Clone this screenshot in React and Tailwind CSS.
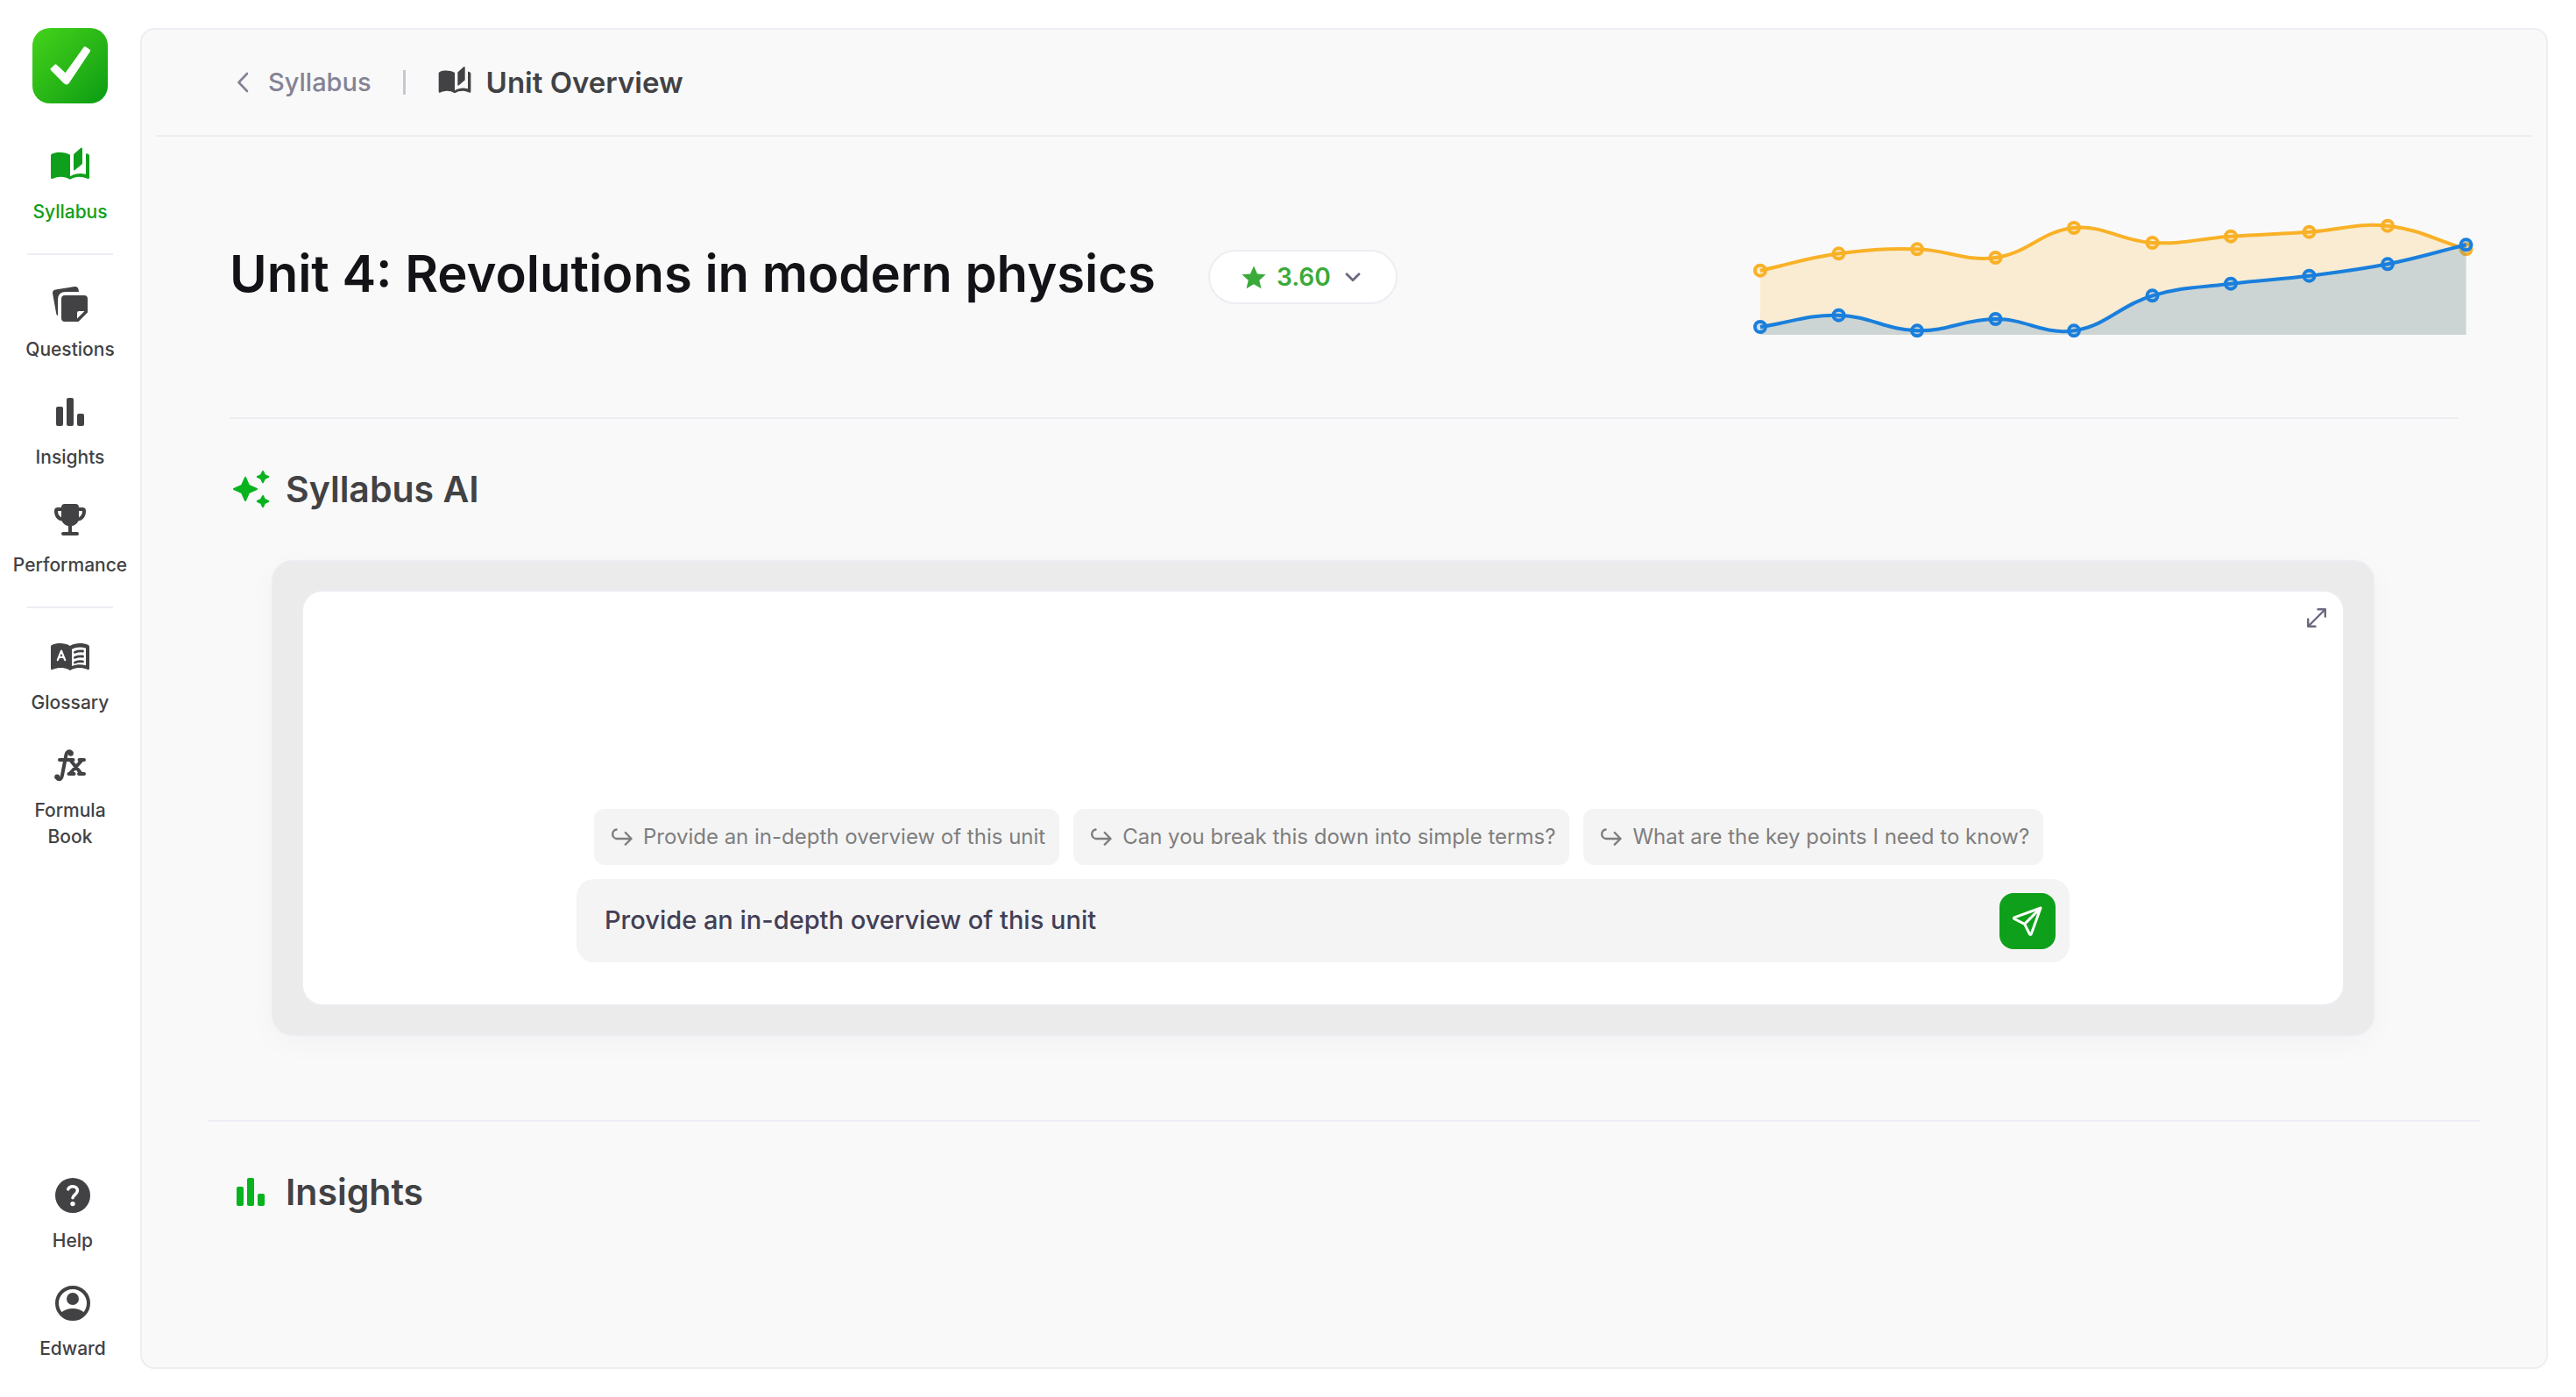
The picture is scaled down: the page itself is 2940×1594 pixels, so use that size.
const ORANGE = [308.7, 289.3, 284.3, 294, 260, 277, 269.7, 264.7, 257.7, 284.3];
const BLUE = [373, 359.7, 377.3, 364, 377.3, 337.3, 323.7, 314.7, 301.3, 279.3];
const CHART_TOP = 244;
const BASELINE = 138;
const STEP = 89.5;

function toPoints(values) {
  return values.map((v, i) => ({ x: 9 + i * STEP, y: v - CHART_TOP }));
}

// Smooth line through the points, using a cardinal spline of tension 0.4.
function splinePath(points) {
  const tension = 0.4;
  const controls = points.map((p, i) => {
    const prev = points[i - 1] || p;
    const next = points[i + 1] || p;
    const d01 = Math.hypot(p.x - prev.x, p.y - prev.y);
    const d12 = Math.hypot(next.x - p.x, next.y - p.y);
    const a = (tension * d01) / (d01 + d12);
    const b = (tension * d12) / (d01 + d12);
    return {
      before: { x: p.x - a * (next.x - prev.x), y: p.y - a * (next.y - prev.y) },
      after: { x: p.x + b * (next.x - prev.x), y: p.y + b * (next.y - prev.y) },
    };
  });
  let d = `M${points[0].x} ${points[0].y}`;
  for (let i = 1; i < points.length; i++) {
    const c1 = controls[i - 1].after;
    const c2 = controls[i].before;
    d += ` C${c1.x} ${c1.y} ${c2.x} ${c2.y} ${points[i].x} ${points[i].y}`;
  }
  return d;
}

function Series({ values, color, fillOpacity }) {
  const points = toPoints(values);
  const line = splinePath(points);
  const last = points[points.length - 1];
  return (
    <g>
      <path d={`${line} L${last.x} ${BASELINE} L${points[0].x} ${BASELINE} Z`} fill={color} fillOpacity={fillOpacity} />
      <path d={line} fill="none" stroke={color} strokeWidth="4" />
      {points.map((p) => (
        <circle key={p.x} cx={p.x} cy={p.y} r="6" fill={color} fillOpacity={fillOpacity} stroke={color} strokeWidth="4" />
      ))}
    </g>
  );
}

function TrendChart() {
  return (
    <svg viewBox="0 0 806 144" className="h-36 w-[806px] shrink-0 overflow-visible" role="img" aria-label="Unit rating trend">
      <Series values={ORANGE} color="#f9b127" fillOpacity="0.18" />
      <Series values={BLUE} color="#1a7fdc" fillOpacity="0.2" />
    </svg>
  );
}

function Icon({ className = "size-12", children }) {
  return (
    <svg viewBox="0 0 48 48" className={className} fill="currentColor" aria-hidden="true">
      {children}
    </svg>
  );
}

function BookIcon({ className }) {
  return (
    <Icon className={className}>
      <path d="M2 11.6Q2 10 3.400 9.500C9.500 7 17.500 7.300 24 10.700V38.800C17.500 34.800 10.500 35 4.400 37.800Q2 38.800 2 36.600Z" />
      <path d="M28 11Q28 10.200 28.600 9.600L36 3Q38 1.600 38 4V20Q38 20.800 37.400 21.400L29.800 27.800Q28 29.200 28 27.200Z" />
      <path d="M24 35.200C29.600 31.600 36 31.200 42 32.800V9Q43.600 9.400 45 10.100Q46 10.600 46 12V36.600Q46 38.800 43.600 37.800C37 35 30.500 34.800 24 38.800Z" />
    </Icon>
  );
}

function NotesIcon() {
  return (
    <Icon>
      <path d="M4.100 12Q3.600 8.200 7.400 7.600L29 4Q33 3.500 33.600 7.500L34 10H19Q10 10 10 19V37Q8.600 36.800 8.300 35.300Z" />
      <path fillRule="evenodd" d="M18 14H40Q44 14 44 18V33.500L33.500 44H18Q14 44 14 40V18Q14 14 18 14ZM32 40.500L40.500 32H34Q32 32 32 34Z" />
    </Icon>
  );
}

function BarsIcon() {
  return (
    <Icon>
      <rect x="8" y="18" width="8" height="22" rx="2" />
      <rect x="20" y="8" width="8" height="32" rx="2" />
      <rect x="32" y="26" width="8" height="14" rx="2" />
    </Icon>
  );
}

function TrophyIcon() {
  return (
    <Icon>
      <path d="M18 6H30Q34 6 34 10H38Q42 10 42 14C42 20 39 24.600 33.400 25.600C31.800 28.800 29.400 30.700 26 31.300V38H32A2 2 0 0 1 32 42H16A2 2 0 0 1 16 38H22V31.300C18.600 30.700 16.200 28.800 14.600 25.600C9 24.600 6 20 6 14Q6 10 10 10H14Q14 6 18 6Z" />
      <path fill="#fff" d="M10 14H14V21.200C11.400 20 10 17.400 10 14ZM38 14H34V21.200C36.600 20 38 17.400 38 14Z" />
    </Icon>
  );
}

function GlossaryIcon() {
  return (
    <Icon>
      <path d="M2 12Q2 10.500 3.200 10C9.500 7.300 17.500 7.300 24 11C30.500 7.300 38.500 7.300 44.800 10Q46 10.500 46 12V36.500Q46 38.600 44 38C37 35.300 30.500 35.300 24 39C17.500 35.300 11 35.300 4 38Q2 38.600 2 36.500Z" />
      <path fill="#fff" d="M26 14.800C31 12 36.500 11.800 42 13.600V33.300C36.500 31.600 31 31.800 26 34Z" />
      <path fill="none" stroke="currentColor" strokeWidth="2.800" strokeLinecap="round" d="M29.400 18.200Q33.500 16.400 38.500 17M29.400 24.200Q33.500 22.400 38.500 23M29.400 30Q33.500 28.200 38.500 28.800" />
      <path fill="none" stroke="#fff" strokeWidth="2.200" strokeLinecap="round" strokeLinejoin="round" d="M9.800 27.200L14 16.600L18.200 27.200M11.200 24H16.800" />
    </Icon>
  );
}

function FormulaIcon() {
  return (
    <Icon>
      <circle cx="24.800" cy="10.800" r="3" />
      <circle cx="9.200" cy="37.600" r="3" />
      <path
        fill="none"
        stroke="currentColor"
        strokeWidth="4"
        strokeLinecap="round"
        d="M25.500 9.400C24 7.400 20.500 7.600 19.500 12L15 35.500C14.200 39.800 12.500 40.600 10 39.800M12 18H27.500M24.500 18.500L36.500 33.500M37.500 18.500L23.800 33.500M34.500 18H40M22.500 34H28.500M34 34H40"
      />
    </Icon>
  );
}

function HelpIcon() {
  return (
    <Icon>
      <circle cx="24" cy="24" r="20" />
      <path
        fill="none"
        stroke="#fff"
        strokeWidth="3.600"
        strokeLinecap="round"
        d="M18.800 16.800C19.800 14.800 21.600 13.800 24 13.800C27.200 13.800 29.400 15.600 29.400 18.400C29.400 20.400 28.200 21.600 26.600 23.200C25 24.600 24 25.400 24 26.800"
      />
      <circle cx="24" cy="33.600" r="2.700" fill="#fff" />
    </Icon>
  );
}

function UserIcon() {
  return (
    <Icon>
      <circle cx="24" cy="24" r="18" fill="none" stroke="currentColor" strokeWidth="4" />
      <circle cx="24" cy="19" r="7" />
      <path d="M10.500 35C17.500 28.300 30.500 28.300 37.500 35A17.400 17.400 0 0 1 10.500 35Z" />
    </Icon>
  );
}

function SparklesIcon() {
  return (
    <Icon>
      <path
        stroke="currentColor"
        strokeWidth="2"
        strokeLinejoin="round"
        d="M18 11L22 20L31 24L22 28L18 37L14 28L5 24L14 20ZM38 4L40 8.200L44.200 10L40 12L38 16.200L36 12L31.800 10L36 8.200ZM38 32L40 36L44.200 38L40 40L38 44.200L36 40L31.800 38L36 36Z"
      />
    </Icon>
  );
}

function LogoIcon() {
  return (
    <svg viewBox="0 0 86 86" className="size-full" fill="#fff" stroke="#fff" strokeWidth="3" strokeLinejoin="round" aria-hidden="true">
      <path d="M22 47L26.500 42.800L37.800 53.400L59.800 22.600L64.600 25.800L40.600 62Q38.800 64 36.800 62Z" />
    </svg>
  );
}

function NavItem({ icon, label, active }) {
  return (
    <a
      href="#"
      aria-current={active ? "page" : undefined}
      className={`flex flex-col items-center gap-[13px] text-center text-[21px] leading-[30px] font-medium ${active ? "text-[#0fa01b]" : "text-[#424244]"}`}
    >
      {icon}
      <span className="max-w-36">{label}</span>
    </a>
  );
}

function Sidebar() {
  return (
    <aside className="flex w-40 shrink-0 flex-col items-center pt-8 pb-10">
      <a href="#" aria-label="Home" className="size-[86px] rounded-[20px] bg-linear-135 from-[#43d41a] to-[#049c14]">
        <LogoIcon />
      </a>
      <nav aria-label="Main" className="mt-12 flex flex-col items-center gap-8">
        <NavItem icon={<BookIcon />} label="Syllabus" active />
        <hr className="w-[98px] border-t-2 border-[#ededf3]" />
        <NavItem icon={<NotesIcon />} label="Questions" />
        <NavItem icon={<BarsIcon />} label="Insights" />
        <NavItem icon={<TrophyIcon />} label="Performance" />
        <hr className="w-[98px] border-t-2 border-[#ededf3]" />
        <NavItem icon={<GlossaryIcon />} label="Glossary" />
        <NavItem
          icon={<FormulaIcon />}
          label={
            <>
              Formula
              <br />
              Book
            </>
          }
        />
      </nav>
      <div className="mt-auto flex flex-col items-center gap-8 pl-1.5">
        <NavItem icon={<HelpIcon />} label="Help" />
        <NavItem icon={<UserIcon />} label="Edward" />
      </div>
    </aside>
  );
}

function Header() {
  return (
    <header className="mx-4 flex h-[122px] items-center border-b-2 border-[#ededf3] pl-[92px]">
      <a href="#" className="flex items-center gap-[22px] text-[29px] leading-10 font-medium text-[#858294]">
        <svg viewBox="0 0 14 24" className="h-6 w-3.5" fill="none" stroke="currentColor" strokeWidth="2.600" strokeLinecap="round" strokeLinejoin="round" aria-hidden="true">
          <path d="M12 2L2.500 12L12 22" />
        </svg>
        Syllabus
      </a>
      <span className="ml-9 h-7 w-[3px] bg-[#c8c7d1]" />
      <div className="ml-9 flex items-center gap-4 text-[#424244]">
        <BookIcon className="size-10" />
        <span className="text-[33px] leading-10 font-semibold">Unit Overview</span>
      </div>
    </header>
  );
}

function UnitTitle() {
  return (
    <section className="mx-[100px] flex h-[322px] items-center justify-between border-b-2 border-[#ededf3]">
      <div className="flex items-center gap-[60px]">
        <h1 className="pb-2 text-[58px] leading-[72px] font-semibold text-[#131216]">Unit 4: Revolutions in modern physics</h1>
        <button type="button" className="flex h-[62px] items-center rounded-full border-2 border-[#ededf3] bg-white pr-10 pl-9 text-[28px] leading-10 font-semibold text-[#3aaa3a]">
          <svg viewBox="0 0 28 27" className="h-[27px] w-7" fill="currentColor" aria-hidden="true">
            <path d="M14 .5L18 9.400L27.600 10.300L20.300 16.700L22.500 26.200L14 21.200L5.500 26.200L7.700 16.700L.4 10.300L10 9.400Z" />
          </svg>
          <span className="ml-3">3.60</span>
          <svg viewBox="0 0 18 11" className="ml-4 h-[11px] w-[18px]" fill="none" stroke="#6b6880" strokeWidth="2.800" strokeLinecap="round" strokeLinejoin="round" aria-hidden="true">
            <path d="M2 1.800L9 8.800L16 1.800" />
          </svg>
        </button>
      </div>
      <TrendChart />
    </section>
  );
}

function SectionHeading({ icon, children }) {
  return (
    <h2 className="flex items-center gap-4 text-[41px] leading-[48px] font-semibold text-[#424244]">
      <span className="text-[#08b31f]">{icon}</span>
      {children}
    </h2>
  );
}

function Suggestion({ children }) {
  return (
    <button type="button" className="flex h-16 items-center gap-3 rounded-xl bg-[#f4f4f4] pr-4 pl-5 text-[24px] leading-8 font-normal text-[#7e7e7e]">
      <svg viewBox="0 0 24 20" className="h-5 w-6" fill="none" stroke="currentColor" strokeWidth="2.400" strokeLinecap="round" strokeLinejoin="round" aria-hidden="true">
        <path d="M5.500 1.500A5.300 5.300 0 0 0 6.600 12H22.500M15.800 5L22.500 12L15.800 18.600" />
      </svg>
      {children}
    </button>
  );
}

function AiPanel() {
  return (
    <div className="mt-[57px] mr-24 ml-12 rounded-3xl border-2 border-[#ececf2] bg-[#ebebeb] p-8 shadow-[0_8px_32px_rgba(0,0,0,0.03)]">
      <div className="relative flex min-h-[475px] flex-col items-center justify-end rounded-3xl border-2 border-[#ececf2] bg-white pb-12">
        <button type="button" aria-label="Expand" className="absolute top-[18px] right-[18px] text-[#6b6880]">
          <svg viewBox="0 0 24 24" className="size-6" fill="none" stroke="currentColor" strokeWidth="2.400" strokeLinecap="round" strokeLinejoin="round" aria-hidden="true">
            <path d="M2.500 21.500L21.500 2.500M13.500 2.200H21.800V10.500M2.200 13.500V21.800H10.500" />
          </svg>
        </button>
        <div className="w-full max-w-[1704px]">
          <div className="flex gap-4 pl-5">
            <Suggestion>Provide an in-depth overview of this unit</Suggestion>
            <Suggestion>Can you break this down into simple terms?</Suggestion>
            <Suggestion>What are the key points I need to know?</Suggestion>
          </div>
          <form className="mt-4 flex h-[95px] items-center rounded-[20px] bg-[#f4f4f4] pr-4 pl-8" onSubmit={(e) => e.preventDefault()}>
            <input
              type="text"
              aria-label="Ask Syllabus AI"
              defaultValue="Provide an in-depth overview of this unit"
              className="min-w-0 flex-1 bg-transparent pb-0.5 text-[29px] leading-10 font-medium text-[#433f56] outline-none"
            />
            <button type="submit" aria-label="Send" className="flex size-16 items-center justify-center rounded-2xl bg-[#0fa01b] text-white">
              <svg viewBox="0 0 24 24" className="size-10" fill="none" stroke="currentColor" strokeWidth="1.800" strokeLinecap="round" strokeLinejoin="round" aria-hidden="true">
                <path d="M10 14L21 3M21 3L14.500 21A.55.55 0 0 1 13.500 21L10 14L3 10.500A.55.55 0 0 1 3 9.500Z" />
              </svg>
            </button>
          </form>
        </div>
      </div>
    </div>
  );
}

export default function App() {
  return (
    <div className="flex min-h-screen bg-white font-['Inter',sans-serif]">
      <Sidebar />
      <main className="my-8 mr-8 min-w-0 flex-1 rounded-2xl border-2 border-[#ededf3] bg-[#f9f9f9]">
        <Header />
        <UnitTitle />
        <section className="mx-[100px] pt-14 pb-24">
          <SectionHeading icon={<SparklesIcon />}>Syllabus AI</SectionHeading>
          <AiPanel />
        </section>
        <section className="mx-[76px] border-t-2 border-[#ededf3] px-6 pt-14">
          <SectionHeading icon={<BarsIcon />}>Insights</SectionHeading>
        </section>
      </main>
    </div>
  );
}
